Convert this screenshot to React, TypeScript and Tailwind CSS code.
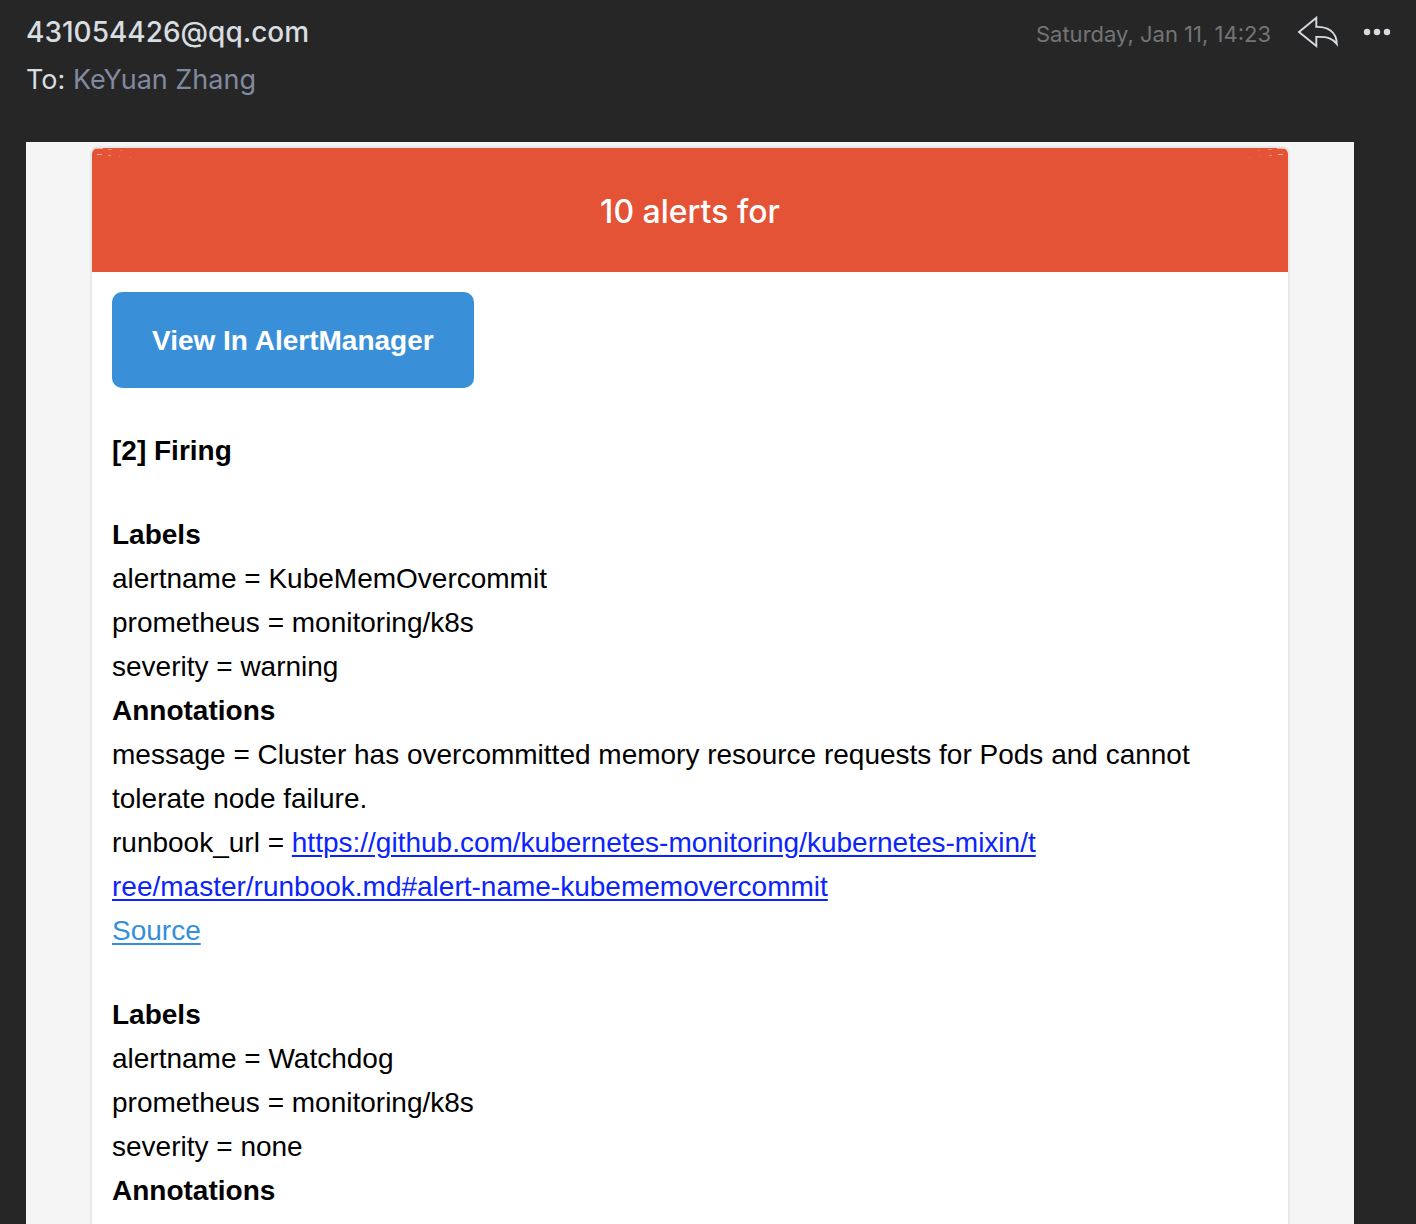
import type { ReactNode } from "react";

type Alert = {
  labels: string[];
  annotations: ReactNode[];
  source?: string;
};

const runbook = [
  "https://github.com/kubernetes-monitoring/kubernetes-mixin/t",
  "ree/master/runbook.md#alert-name-kubememovercommit",
];

const alerts: Alert[] = [
  {
    labels: [
      "alertname = KubeMemOvercommit",
      "prometheus = monitoring/k8s",
      "severity = warning",
    ],
    annotations: [
      "message = Cluster has overcommitted memory resource requests for Pods and cannot tolerate node failure.",
      <>
        runbook_url ={" "}
        <a href={runbook.join("")} className="break-all text-[#0b24fb] underline underline-offset-3">
          {runbook[0]}
          <br />
          {runbook[1]}
        </a>
      </>,
    ],
    source: "#source",
  },
  {
    labels: ["alertname = Watchdog", "prometheus = monitoring/k8s", "severity = none"],
    annotations: [],
  },
];

function ReplyIcon() {
  return (
    <svg width="42" height="32" viewBox="0 0 42 32" fill="none" stroke="#d5dbe0" strokeWidth="1.9" aria-hidden="true">
      <path d="M2 16 L19.3 1.8 V10.9 C30 10.6 39.6 15 39.8 28 C36 22.5 31 20.6 19.3 20.9 V30 Z" strokeLinejoin="miter" />
    </svg>
  );
}

function MoreIcon() {
  return (
    <svg width="28" height="8" viewBox="0 0 28 8" fill="#d5dbe0" aria-hidden="true">
      <circle cx="4" cy="4" r="3.2" />
      <circle cx="14" cy="4" r="3.2" />
      <circle cx="24" cy="4" r="3.2" />
    </svg>
  );
}

/* Light flecks beside the banner's rounded corners. */
function Flecks({ className }: { className: string }) {
  return (
    <svg width="40" height="12" viewBox="0 0 40 12" className={className} stroke="#fff" aria-hidden="true">
      <path d="M4 .5h7M5 6.500h5" strokeOpacity=".55" />
      <path d="M16 1.500h4M16 7.500h3" strokeOpacity=".35" />
      <path d="M28 2.500h2M27 8.500h1M38 9.500h1" strokeOpacity=".2" />
    </svg>
  );
}

function AlertDetails({ alert }: { alert: Alert }) {
  return (
    <section>
      <h3 className="font-bold">Labels</h3>
      {alert.labels.map((l) => (
        <p key={l}>{l}</p>
      ))}
      <h3 className="font-bold">Annotations</h3>
      {alert.annotations.map((a, i) => (
        <p key={i}>{a}</p>
      ))}
      {alert.source && (
        <a href={alert.source} className="text-[#348eda] underline underline-offset-3">
          Source
        </a>
      )}
    </section>
  );
}

export default function App() {
  return (
    <div className="flex min-h-screen flex-col bg-[#262626] font-['Liberation_Sans',Arial,sans-serif]">
      <header className="flex items-start justify-between pt-2 pr-[25px] pb-[38px] pl-[26px] font-['Inter',sans-serif] text-[27px] leading-12 text-[#d8dde0]">
        <div>
          <h1 className="text-[28px] font-medium">431054426@qq.com</h1>
          <p>
            To: <span className="text-[#818a9f]">KeYuan Zhang</span>
          </p>
        </div>
        <div className="flex items-center">
          <time className="pt-1 text-[22px] leading-11 text-[#747477]">Saturday, Jan 11, 14:23</time>
          <button type="button" aria-label="Reply" className="ml-[26px]">
            <ReplyIcon />
          </button>
          <button type="button" aria-label="More" className="ml-6">
            <MoreIcon />
          </button>
        </div>
      </header>

      <main className="mr-[62px] ml-[26px] flex flex-1 flex-col bg-[#f5f5f5] px-4 pt-1">
        <article className="mx-auto flex w-full max-w-[1200px] flex-1 flex-col rounded-t-lg border-2 border-b-0 border-[#e9e9e9] bg-white">
          <div className="relative rounded-t-md bg-[#e55337] px-5 pt-[42px] pb-[38px] text-center text-[32px] leading-11 font-medium text-white">
            <Flecks className="absolute top-0 left-0" />
            <Flecks className="absolute top-0 right-0 -scale-x-100" />
            <h2 className="font-['Inter',sans-serif]">10 alerts for</h2>
          </div>
          <div className="flex flex-col items-start px-5 pt-5 text-[28px] leading-11 text-black">
            <a
              href="#alertmanager"
              className="rounded-[10px] bg-[#3a90d8] px-10 pt-[27px] pb-[25px] font-bold text-white"
            >
              View In AlertManager
            </a>
            <div className="flex flex-col gap-10 pt-[41px]">
              <h3 className="font-bold">[2] Firing</h3>
              {alerts.map((a, i) => (
                <AlertDetails key={i} alert={a} />
              ))}
            </div>
          </div>
        </article>
      </main>
    </div>
  );
}
